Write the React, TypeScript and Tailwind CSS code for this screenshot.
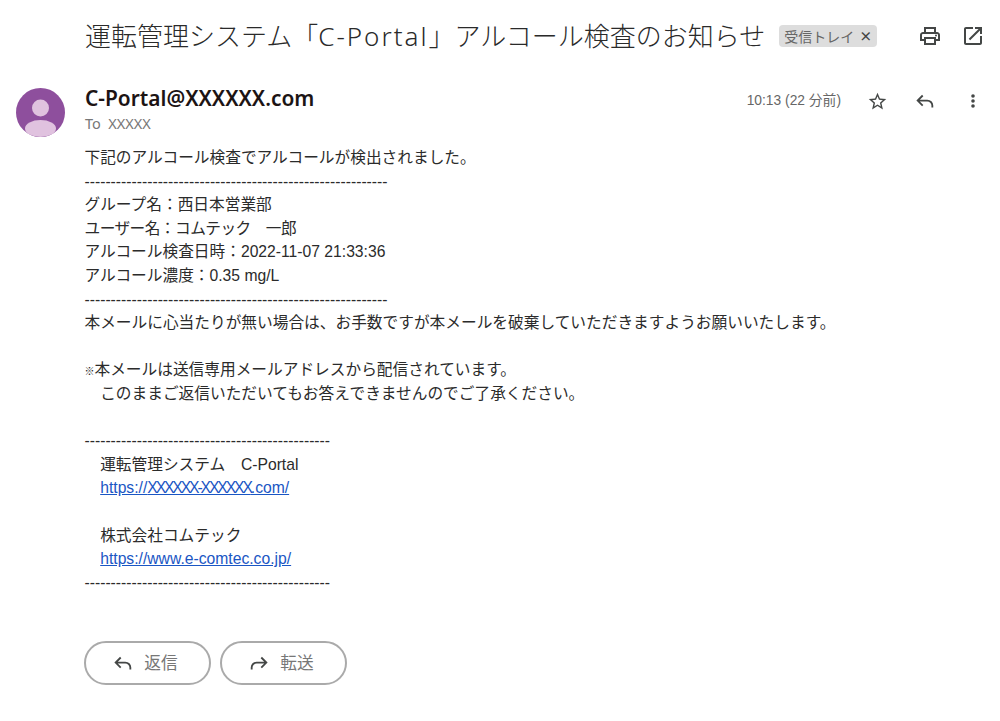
const bodyLines = [
  "下記のアルコール検査でアルコールが検出されました。",
  "----------------------------------------------------------",
  "グループ名：西日本営業部",
  "name:ユーザー名：コムテック　一郎",
  "アルコール検査日時：2022-11-07 21:33:36",
  "アルコール濃度：0.35 mg/L",
  "----------------------------------------------------------",
  "本メールに心当たりが無い場合は、お手数ですが本メールを破棄していただきますようお願いいたします。",
  "",
  "note:本メールは送信専用メールアドレスから配信されています。",
  "　このままご返信いただいてもお答えできませんのでご了承ください。",
  "",
  "-----------------------------------------------",
  "　運転管理システム　C-Portal",
  "xlink:",
  "",
  "　株式会社コムテック",
  "link:https://www.e-comtec.co.jp/",
  "-----------------------------------------------",
];

function PrintIcon() {
  return (
    <svg viewBox="0 0 24 24" className="w-6 h-6 fill-[#444746]">
      <path d="M19 8h-1V3H6v5H5c-1.66 0-3 1.34-3 3v6h4v4h12v-4h4v-6c0-1.66-1.34-3-3-3zM8 5h8v3H8V5zm8 12v2H8v-4h8v2zm2-2v-2H6v2H4v-4c0-.55.45-1 1-1h14c.55 0 1 .45 1 1v4h-2z" />
      <circle cx="18" cy="11.5" r="1" />
    </svg>
  );
}

function OpenIcon() {
  return (
    <svg viewBox="0 0 24 24" className="w-6 h-6 fill-[#444746]">
      <path d="M19 19H5V5h7V3H5c-1.11 0-2 .9-2 2v14c0 1.1.89 2 2 2h14c1.1 0 2-.9 2-2v-7h-2v7zM14 3v2h3.59l-9.83 9.83 1.41 1.41L19 6.41V10h2V3h-7z" />
    </svg>
  );
}

function StarIcon() {
  return (
    <div className="w-6 h-6 flex items-center justify-center">
      <svg viewBox="0 0 24 24" className="w-[21px] h-[21px] fill-[#444746]">
        <path d="M22 9.24l-7.19-.62L12 2 9.19 8.63 2 9.24l5.46 4.73L5.82 21 12 17.27 18.18 21l-1.63-7.03L22 9.24zM12 15.4l-3.76 2.27 1-4.28-3.32-2.88 4.38-.38L12 6.1l1.71 4.04 4.38.38-3.32 2.88 1 4.28L12 15.4z" />
      </svg>
    </div>
  );
}

function ReplyIcon({ flip = false }: { flip?: boolean }) {
  return (
    <svg viewBox="0 0 24 24" className={flip ? "w-[22px] h-[22px] -scale-x-100" : "w-[22px] h-[22px]"} fill="none" stroke="#444746" strokeWidth="2">
      <path d="M9.5 6 4 11.5 9.5 17M4 11.5h10.5a5.5 5.5 0 0 1 5.5 5.5v2" />
    </svg>
  );
}

function MoreIcon() {
  return (
    <svg viewBox="0 0 24 24" className="w-6 h-6 fill-[#444746]">
      <circle cx="12" cy="7" r="1.8" />
      <circle cx="12" cy="12" r="1.8" />
      <circle cx="12" cy="17" r="1.8" />
    </svg>
  );
}

function Avatar() {
  return (
    <svg viewBox="0 0 49 49" className="w-[49px] h-[49px] shrink-0">
      <circle cx="24.5" cy="24.5" r="24.5" fill="#8e4f9d" />
      <circle cx="24.5" cy="20" r="8.5" fill="#e0c2df" />
      <ellipse cx="24.5" cy="40.5" rx="15.5" ry="8.5" fill="#e0c2df" />
    </svg>
  );
}

function BodyLine({ line }: { line: string }) {
  if (line.startsWith("xlink:")) {
    return (
      <div className="h-[23.6px] whitespace-pre">
        {"　"}
        <a href="#" className="text-[#1a56c4] underline">
          https://<span className="tracking-[-2.1px]">XXXXXX-XXXXXX</span>.com/
        </a>
      </div>
    );
  }
  if (line.startsWith("link:")) {
    return (
      <div className="h-[23.6px] whitespace-pre">
        {"　"}
        <a href="#" className="text-[#1a56c4] underline">{line.slice(5)}</a>
      </div>
    );
  }
  if (line.startsWith("note:")) {
    return (
      <div className="h-[23.6px] whitespace-pre">
        <span className="text-[10px] font-bold text-[#222]">※</span>
        {line.slice(5)}
      </div>
    );
  }
  if (line.startsWith("name:")) {
    return <div className="h-[23.6px] whitespace-pre tracking-[-0.55px]">{line.slice(5)}</div>;
  }
  return <div className="h-[23.6px] whitespace-pre">{line}</div>;
}

export default function App() {
  return (
    <div className="w-[1000px] h-[721px] bg-white overflow-hidden font-['Liberation_Sans','Noto_Sans_CJK_JP',sans-serif]">
      {/* subject */}
      <div className="flex items-center pl-[85px] pr-[15px] pt-[16px] h-[56px]">
        <h1 className="text-[26px] font-['Noto_Sans','Noto_Sans_CJK_JP',sans-serif] font-light text-[#2a2a2a] whitespace-nowrap">
          運転管理システム「<span className="tracking-[2px]">C-Portal</span>」アルコール検査のお知らせ
        </h1>
        <span className="ml-[14px] flex items-center h-[22px] pl-[5px] pr-[5px] gap-[5px] rounded bg-[#dddddd] text-[14px] text-[#666] font-['Noto_Sans_CJK_JP',sans-serif] whitespace-nowrap">
          受信トレイ <span className="text-[13px] font-bold text-[#444]">×</span>
        </span>
        <div className="ml-auto flex items-center gap-[19px]">
          <PrintIcon />
          <OpenIcon />
        </div>
      </div>

      {/* sender */}
      <div className="flex pl-4 pr-[15px] pt-[32px]">
        <Avatar />
        <div className="ml-5 h-[49px] -mt-1">
          <div className="text-[20.9px] leading-[28px] font-semibold text-[#1c1414] font-['Noto_Sans',sans-serif]">C-Portal@XXXXXX.com</div>
          <div className="text-[14.5px] leading-[20px] mt-[1px] text-[#777] font-['Noto_Sans',sans-serif]">To&nbsp; XXXXX</div>
        </div>
        <div className="ml-auto flex items-center self-start h-[26px] gap-6">
          <span className="text-[13.8px] text-[#666]">10:13 (22 分前)</span>
          <StarIcon />
          <div className="w-6 h-6 flex items-center justify-center">
            <ReplyIcon />
          </div>
          <MoreIcon />
        </div>
      </div>

      {/* body */}
      <div className="pl-[84.5px] mt-[9px] text-[15.7px] leading-[23.6px] text-[#2b2b2b]">
        {bodyLines.map((line, i) => (
          <BodyLine key={i} line={line} />
        ))}
      </div>

      {/* actions */}
      <div className="flex gap-[9px] pl-[83.5px] mt-[47px]">
        <button className="w-[127px] h-[44px] pr-[4px] rounded-full border-2 border-[#aaaaaa] flex items-center justify-center gap-[10px] text-[16.7px] text-[#777]">
          <ReplyIcon /> 返信
        </button>
        <button className="w-[127px] h-[44px] pr-[4px] rounded-full border-2 border-[#aaaaaa] flex items-center justify-center gap-[10px] text-[16.7px] text-[#777]">
          <ReplyIcon flip /> 転送
        </button>
      </div>
    </div>
  );
}
